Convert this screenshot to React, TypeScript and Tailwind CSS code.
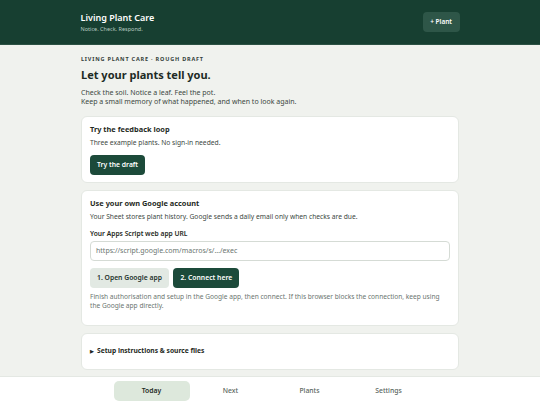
export default function App() {
  const tabs = ['Today', 'Next', 'Plants', 'Settings'];

  return (
    <div className="h-screen flex flex-col bg-[#f0f2ee] text-[#1f2a24] overflow-hidden" style={{ fontFamily: '"Noto Sans", sans-serif' }}>
      <header className="h-[45px] shrink-0 bg-[#173f31] border-b border-[#2c5244]">
        <div className="max-w-[379px] mx-auto h-full flex items-center justify-between">
          <div className="pt-[1px]">
            <h1 className="text-[9px] font-semibold text-white leading-[11px]">Living Plant Care</h1>
            <p className="text-[5.5px] text-[#b9cbc2] leading-[8px] mt-[2.5px]">Notice. Check. Respond.</p>
          </div>
          <button className="h-[20px] px-[7.5px] rounded-[4px] bg-[#2e5648] text-white text-[6.5px] font-semibold">+ Plant</button>
        </div>
      </header>

      <main className="flex-1 overflow-hidden">
        <div className="max-w-[378px] mx-auto pt-[9.5px]">
          <p className="text-[5.5px] font-bold tracking-[0.8px] text-[#33403a] leading-[8px]">LIVING PLANT CARE · ROUGH DRAFT</p>
          <h2 className="text-[11px] font-bold text-[#1d2b25] leading-[15px] mt-[4px]">Let your plants tell you.</h2>
          <p className="text-[7px] text-[#3c4842] leading-[9.5px] mt-[6px]">
            Check the soil. Notice a leaf. Feel the pot.
            <br />
            Keep a small memory of what happened, and when to look again.
          </p>

          <div className="mt-[9px] flex flex-col gap-[6.5px]">
            <section className="bg-white rounded-[6px] border border-[#e4e8e3] px-[8px] pt-[7.5px] pb-[7px]">
              <h3 className="text-[7.4px] font-bold text-[#1f2a24] leading-[10px]">Try the feedback loop</h3>
              <p className="text-[6.7px] text-[#3c4842] leading-[9px] mt-[4.4px]">Three example plants. No sign-in needed.</p>
              <button className="mt-[7.7px] h-[20px] px-[7px] rounded-[4px] bg-[#1c4a3a] text-white text-[6.8px] font-semibold">Try the draft</button>
            </section>

            <section className="bg-white rounded-[6px] border border-[#e4e8e3] px-[8px] pt-[7.5px] pb-[15.5px]">
              <h3 className="text-[7.4px] font-bold text-[#1f2a24] leading-[10px]">Use your own Google account</h3>
              <p className="text-[6.7px] text-[#3c4842] leading-[9px] mt-[4.4px]">Your Sheet stores plant history. Google sends a daily email only when checks are due.</p>
              <label className="block text-[6.7px] font-semibold text-[#1f2a24] leading-[9px] mt-[7.7px]">Your Apps Script web app URL</label>
              <div className="mt-[3px] h-[20px] rounded-[4px] border border-[#d5dbd5] flex items-center px-[5px] text-[7px] text-[#6b7570]">
                https://script.google.com/macros/s/…/exec
              </div>
              <div className="mt-[6.6px] flex gap-[4.5px]">
                <button className="h-[20px] px-[7px] rounded-[4px] bg-[#e2e9e3] text-[#24332c] text-[6.8px] font-semibold">1. Open Google app</button>
                <button className="h-[20px] px-[7px] rounded-[4px] bg-[#1c4a3a] text-white text-[6.8px] font-semibold">2. Connect here</button>
              </div>
              <p className="text-[6.6px] text-[#6b7570] leading-[9px] mt-[4px]">
                Finish authorisation and setup in the Google app, then connect. If this browser blocks the connection, keep using the Google app directly.
              </p>
            </section>

            <section className="bg-white rounded-[6px] border border-[#e4e8e3] px-[8px] h-[37px] flex items-center">
              <p className="text-[6.7px] font-bold text-[#1f2a24] flex items-center gap-[3px]">
                <span className="text-[4.5px]">▶</span>
                Setup instructions &amp; source files
              </p>
            </section>
          </div>
        </div>
      </main>

      <nav className="shrink-0 bg-white border-t border-[#e4e8e3] py-[4px]">
        <div className="w-[313px] mx-auto grid grid-cols-4 gap-[3px]">
          {tabs.map((t, i) => (
            <button
              key={t}
              className={
                i === 0
                  ? 'h-[20px] rounded-[5px] bg-[#dde8dc] text-[#1f2a24] text-[6.8px] font-semibold'
                  : 'h-[20px] rounded-[5px] text-[#5a6560] text-[6.8px] font-medium'
              }
            >
              {t}
            </button>
          ))}
        </div>
      </nav>
    </div>
  );
}
